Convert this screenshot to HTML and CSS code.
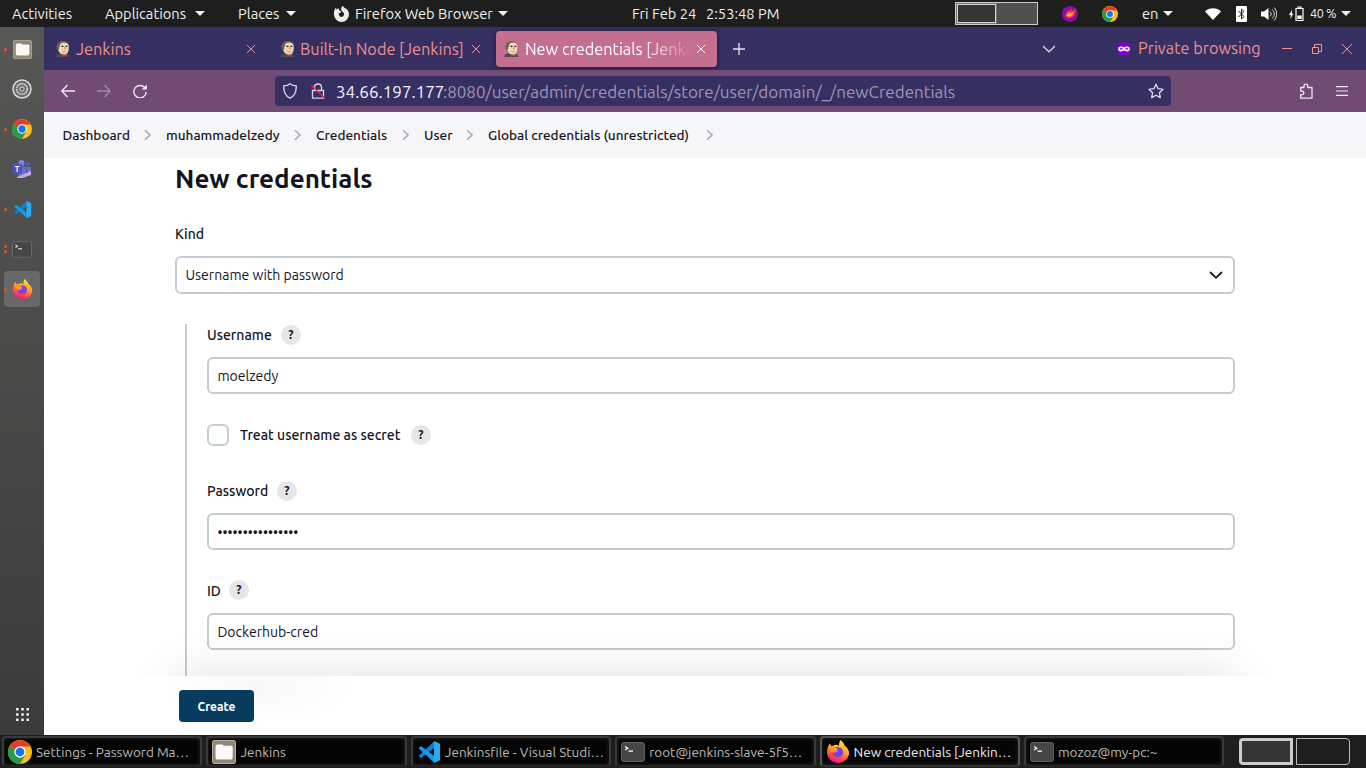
FILE: index.html
```html
<!DOCTYPE html>
<html lang="en">
<head>
<meta charset="utf-8">
<title>New credentials [Jenkins]</title>
<link rel="stylesheet" href="styles.css">
</head>
<body>
<svg class="defs" width="0" height="0">
  <defs>
    <linearGradient id="fxg" x1=".7" y1="0" x2=".3" y2="1"><stop offset="0" stop-color="#ffe83e"/><stop offset=".45" stop-color="#ff9a28"/><stop offset=".75" stop-color="#ff4250"/><stop offset="1" stop-color="#e8118c"/></linearGradient>
    <symbol id="chrome" viewBox="0 0 24 24">
      <circle cx="12" cy="12" r="12" fill="#fbc116"/>
      <path d="M12 12 1.600 6A12 12 0 0 0 12 24l5.200-9z" fill="#2a9a48"/>
      <path d="M12 12 1.600 6A12 12 0 0 1 22.400 6.600H12z" fill="#e33b2e"/>
      <circle cx="12" cy="12" r="5.700" fill="#fff"/><circle cx="12" cy="12" r="4.400" fill="#1a73e8"/>
    </symbol>
    <symbol id="firefox" viewBox="0 0 24 24">
      <path d="M14.500 0c2 1.500 3.500 3.500 4 5.500 3 2 5 5 4.600 9A11.300 11.300 0 0 1 1 13.500C.7 10 1.700 7 3.500 3.500L5.700 6 9.500 4.800C11 4.600 12.200 5 13 6c0-2.500.3-4.500 1.500-6z" fill="url(#fxg)"/>
      <path d="M8 8.500c3-2.500 7.500-1.500 8.700 1.700 1.300 3.600-.7 7-4.700 7-3.400 0-5.800-2.400-5.300-5 .9 1 2.500.8 3.400 0l2-.9c-1-.8-2.500-.8-4.100-2.800z" fill="#7542e5"/>
      <path d="M3 6.500c3-1.500 6 .3 9 2.600-.6 1.600-3 1-4.500 3C5 12 4 9 3 6.500z" fill="#ff9629"/>
    </symbol>
    <symbol id="code" viewBox="0 0 24 24">
      <path d="M17 1.500 1.500 15.800 4 18 18 7.500z" fill="#1180c4"/><path d="M17 22.500 1.500 8.200 4 6 18 16.500z" fill="#0f9be8"/><path d="M17 1 23 3.800v16.400L17 23z" fill="#29a9f2"/>
    </symbol>
    <symbol id="term" viewBox="0 0 24 20"><rect x=".6" y=".6" width="22.800" height="18.800" rx="2" fill="#464646" stroke="#777" stroke-width=".8"/><path d="m4 4.500 2.800 1.700L4 7.900M7.500 9.200H12" fill="none" stroke="#fff" stroke-width="1.200"/></symbol>
    <symbol id="files" viewBox="0 0 24 24"><rect x=".5" y=".5" width="23" height="23" rx="1.800" fill="#8f8775" stroke="#b9b3a0"/><path d="M3.500 7c0-2 .8-2.500 2-2.500h5l1.200 1.200H19c1.200 0 1.700.7 1.700 1.800v9.700c0 1.600-.7 2.300-2.300 2.300H5.800c-1.600 0-2.300-.7-2.300-2.300z" fill="#faf9f7"/></symbol>
    <symbol id="jenkins" viewBox="0 0 14 16">
      <path d="M0 16c0-2 1.200-3 3-3.400l8.500.2c1.400.5 2 1.500 2 3.200z" fill="#335061"/>
      <path d="M2 5.500C2 2.200 4.500.5 7.800.5s5.700 2 5.700 5.300c0 5-1.500 8-5 8.500C5 14 2 11 2 5.500z" fill="#f0d6b7" stroke="#4b403a" stroke-width=".5"/>
      <path d="M1.300 8C.3 3.500 3 .2 7 .2c2 0 4 .5 5.300 2C10 1.200 7 1 5.500 2.300 4.300 3.500 4.500 5 3.800 6.500L3.200 9z" fill="#6a6258"/>
      <path d="M6 5.400h2M10 5.400h1.800" stroke="#2c2522" stroke-width="1.100"/>
      <path d="M9.300 6v2h1M6.800 10.500c1.300.6 2.700.5 3.800-.2" stroke="#a0755c" stroke-width=".7" fill="none"/>
      <path d="m6 12.700 2.800 1.100 2.700-1.100V16l-2.700-1.200L6 16z" fill="#d33833"/>
    </symbol>
    <symbol id="down" viewBox="0 0 10 5"><path d="M0 0h10L5 5z" fill="#eee"/></symbol>
    <symbol id="close" viewBox="0 0 10 10"><path d="m1 1 8 8M9 1 1 9" stroke="currentColor" fill="none"/></symbol>
    <symbol id="crumb" viewBox="0 0 8 12"><path d="m1 1.200 5 4.800-5 4.800" stroke="#a5a5b3" stroke-width="1.500" fill="none"/></symbol>
  </defs>
</svg>

<header class="panel">
  <span class="activities">Activities</span>
  <span class="applications">Applications</span><svg class="down"><use href="#down"/></svg>
  <span class="places">Places</span><svg class="down"><use href="#down"/></svg>
  <svg class="fx-mono" viewBox="0 0 16 16"><path d="M2.500 2 4 3.500 5.500 2l.7 2.200L8.500 6 5.700 7.500C6 10 7 11 8.500 11a2.800 2.800 0 0 0 1-5.300L8 3.800 9 0c1.200.3 2 1 2.600 2C14.500 3.200 16 5.600 16 8.500A7.500 7.500 0 0 1 1 8.500C.8 6 1.300 4 2.500 2z" fill="#eee"/></svg>
  <span class="app-name">Firefox Web Browser</span><svg class="down"><use href="#down"/></svg>
  <span class="date">Fri Feb 24</span><span class="time">2:53:48 PM</span>
  <div class="workspaces"><i class="on"></i><i></i></div>
  <svg class="flame" viewBox="0 0 16 16"><circle cx="8" cy="8" r="8" fill="#8a0fa6"/><path d="M3 9.500 6.500 3.500l-.3 3L9.800 2.500 9.500 6 13.500 3c.3 4-1 8-5.500 9-2.500.2-3.500-1-5-2.500z" fill="#ff3f3c"/><path d="m4.500 9.700 3-4-.2 3L11 5.500c0 3-1.500 5-4 5z" fill="#ffb92e"/></svg>
  <svg class="chrome-s"><use href="#chrome"/></svg>
  <span class="lang">en</span><svg class="down lang-down"><use href="#down"/></svg>
  <svg class="wifi" viewBox="0 0 16 12"><path d="M0 3.500C4-.8 12-.8 16 3.500L8 12z" fill="#fff"/></svg>
  <svg class="bt" viewBox="0 0 11 16"><rect width="11" height="16" rx="1" fill="#fff"/><path d="M2.500 5 8 10.500l-2.500 2.300V3.200L8 5.500 2.500 11" fill="none" stroke="#1e1e1e"/></svg>
  <svg class="vol" viewBox="0 0 16 16"><path d="M0 5.500h3L7.500 2v12L3 10.500H0z" fill="#fff"/><path d="M9 5.500c1.500 1.500 1.500 3.500 0 5M11 3.300c3 2.500 3 6.800 0 9.400M13 1.500c3.500 3.500 3.500 9.500 0 13" fill="none" stroke="#ddd"/></svg>
  <svg class="bat" viewBox="0 0 15 16"><path d="M7 2.500h7v12H7zM9 1h3v1.500H9z" fill="none" stroke="#fff" stroke-width="1.200"/><path d="M8.300 9.500h4.400V13H8.300z" fill="#fff"/><path d="M3.200 3.500 0 9h1.800l-.4 4L4.300 7.500H2.600z" fill="#fff"/></svg>
  <span class="pct">40 %</span><svg class="down"><use href="#down"/></svg>
</header>

<div class="desktop">
  <aside class="dock">
    <div class="dock-item run"><svg width="19" height="19"><use href="#files"/></svg></div>
    <div class="dock-item"><svg width="20" height="20" viewBox="0 0 20 20"><circle cx="10" cy="10" r="9" fill="#666" stroke="#ddd" stroke-width="1.500"/><circle cx="10" cy="10" r="5.300" fill="none" stroke="#c4c4c4" stroke-width="2" stroke-dasharray="1.900 .5"/><circle cx="10" cy="10" r="3.200" fill="#bbb" stroke="#666" stroke-width=".8"/><circle cx="10" cy="10" r="1.300" fill="#555"/></svg></div>
    <div class="dock-item run"><svg width="20" height="20"><use href="#chrome"/></svg></div>
    <div class="dock-item"><svg width="20" height="20" viewBox="0 0 20 20"><circle cx="9.500" cy="4" r="3" fill="#7b83eb"/><circle cx="16" cy="5" r="2.200" fill="#5059c9"/><path d="M6 7.500h8V18a5 5 0 0 1-8-4zM14.500 8H19v6a3.500 3.500 0 0 1-4 3z" fill="#6570d6"/><rect x=".5" y="5" width="9.500" height="9.500" rx="1" fill="#4b53bc"/><path d="M3 7.500h4.500M5.200 7.500V13" stroke="#fff" stroke-width="1.200"/><path d="m5 18 14-6v4l-9 3H5z" fill="#c9a7ea"/></svg></div>
    <div class="dock-item run"><svg width="19" height="19"><use href="#code"/></svg></div>
    <div class="dock-item run two"><svg width="20" height="17"><use href="#term"/></svg></div>
    <div class="dock-item run active"><svg width="21" height="21"><use href="#firefox"/></svg></div>
    <svg class="grid-icon" viewBox="0 0 13 13"><path d="M1.300 0v13M6.500 0v13M11.700 0v13" stroke="#f3f3f3" stroke-width="2.500" stroke-dasharray="2.600 2.600"/></svg>
  </aside>

  <main class="window">
    <div class="tabs">
      <div class="tab t1"><svg class="fav"><use href="#jenkins"/></svg><span>Jenkins</span><svg class="x"><use href="#close"/></svg></div>
      <div class="tab t2"><svg class="fav"><use href="#jenkins"/></svg><span>Built-In Node [Jenkins]</span><svg class="x"><use href="#close"/></svg></div>
      <div class="tab t3"><svg class="fav"><use href="#jenkins"/></svg><span>New credentials [Jenkins]</span><svg class="x"><use href="#close"/></svg></div>
      <svg class="plus" viewBox="0 0 12 12"><path d="M6 0v12M0 6h12" stroke="#e8e4ee" stroke-width="1.300"/></svg>
      <svg class="list" viewBox="0 0 12 8"><path d="m0 1 6 5.800L12 1" fill="none" stroke="#d6d2e0" stroke-width="1.300"/></svg>
      <svg class="mask" viewBox="0 0 14 14"><circle cx="7" cy="7" r="7" fill="#8000d7"/><path d="M4 4.500c1.200 0 2 .6 3 .6s1.800-.6 3-.6c1.700 0 2.800 1 2.800 2.500S11.800 9.500 10.200 9.500 8 8.500 7 8.500s-1.600 1-3.200 1S1.200 8.500 1.200 7 2.300 4.500 4 4.500z" fill="#fff"/><path d="M3 7.300c.6-.8 1.800-.8 2.500 0M8.500 7.300c.7-.8 1.900-.8 2.500 0" stroke="#8000d7" stroke-width="1.200" fill="none"/></svg>
      <span class="private">Private browsing</span>
      <svg class="win" viewBox="0 0 10 10"><path d="M0 4.500h10" stroke="#f59393"/></svg>
      <svg class="win" viewBox="0 0 10 10"><path d="M.5 3.500h6v6h-6zM2.500 3.500v-3h7v7h-3" fill="none" stroke="#f59393"/></svg>
      <svg class="win" viewBox="0 0 10 10"><path d="m0 0 10 10M10 0 0 10" stroke="#f59393"/></svg>
    </div>
    <div class="toolbar">
      <svg class="nav" viewBox="0 0 14 14"><path d="M14 7H1M6.500 1 .8 7l5.700 6" fill="none" stroke="#eee6f0" stroke-width="1.400"/></svg>
      <svg class="nav" viewBox="0 0 14 14"><path d="M0 7h13M7.500 1l5.700 6-5.700 6" fill="none" stroke="#a588ab" stroke-width="1.300"/></svg>
      <svg class="nav" viewBox="0 0 14 14"><path d="M12.600 5A6.200 6.200 0 1 0 13.200 8" fill="none" stroke="#f2ebf3" stroke-width="1.400"/><path d="M13.800.4v5.200H8.600z" fill="#f2ebf3"/></svg>
      <div class="url">
        <svg class="shield" viewBox="0 0 14 16"><path d="M7 .8c1.800 1.500 3.800 2.100 6.200 2.100C13.500 9 11.500 13 7 15.200 2.500 13 .5 9 .8 2.900 3.200 2.900 5.200 2.300 7 .8z" fill="none" stroke="#d8d4e3" stroke-width="1.400"/></svg>
        <svg class="lock" viewBox="0 0 14 16"><path d="M1.500 7.500h11v7.700h-11zM3.500 7.500V4.500c0-4.700 7-4.700 7 0v3" fill="none" stroke="#d8d4e3" stroke-width="1.300"/><path d="m0 2 14 13.500" stroke="#f0225c" stroke-width="1.400"/></svg>
        <span class="host">34.66.197.177</span><span class="path">:8080/user/admin/credentials/store/user/domain/_/newCredentials</span>
        <svg class="star" viewBox="0 0 16 16"><path d="m8 1.200 2.100 4.500 4.900.6-3.600 3.400.9 4.900L8 12.200l-4.300 2.400.9-4.900L1 6.300l4.900-.6z" fill="none" stroke="#e0dce8" stroke-width="1.300" stroke-linejoin="round"/></svg>
      </div>
      <svg class="ext" viewBox="0 0 15 16"><path d="M1.700 4.500H5V3c0-2.600 3.700-2.600 3.700 0v1.500H13v10.700H1.700v-3.500H3c2.500 0 2.500-3.600 0-3.600H1.700z" fill="none" stroke="#efe7f1" stroke-width="1.300" stroke-linejoin="round"/></svg>
      <svg class="menu" viewBox="0 0 12 10"><path d="M0 .7h12M0 5h12M0 9.300h12" stroke="#efe7f1" stroke-width="1.200"/></svg>
    </div>

    <section class="page">
      <nav class="crumbs">
        <span class="c1">Dashboard</span><svg><use href="#crumb"/></svg>
        <span class="c2">muhammadelzedy</span><svg><use href="#crumb"/></svg>
        <span class="c3">Credentials</span><svg><use href="#crumb"/></svg>
        <span class="c4">User</span><svg><use href="#crumb"/></svg>
        <span class="c5">Global credentials (unrestricted)</span><svg><use href="#crumb"/></svg>
      </nav>
      <div class="form">
        <h1>New credentials</h1>
        <div class="label kind">Kind</div>
        <div class="field select"><span>Username with password</span><svg viewBox="0 0 14 9"><path d="m1.500 1.500 5.500 5.300 5.500-5.300" fill="none" stroke="#14141f" stroke-width="1.800" stroke-linecap="round"/></svg></div>
        <div class="group">
          <div class="label l-user"><span>Username</span><b class="help">?</b></div>
          <div class="field f-user"><span>moelzedy</span></div>
          <div class="label check"><i class="box"></i><span>Treat username as secret</span><b class="help">?</b></div>
          <div class="label l-pass"><span>Password</span><b class="help">?</b></div>
          <div class="field f-pass"><span>••••••••••••••••</span></div>
          <div class="label l-id"><span>ID</span><b class="help">?</b></div>
          <div class="field f-id"><span>Dockerhub-cred</span></div>
        </div>
      </div>
      <footer class="actions"><div class="actions-inner"><button class="create">Create</button></div></footer>
    </section>
  </main>
</div>

<footer class="taskbar">
  <div class="task k1"><svg class="ic"><use href="#chrome"/></svg><span>Settings - Password Ma…</span></div>
  <div class="task k2"><svg class="ic"><use href="#files"/></svg><span>Jenkins</span></div>
  <div class="task k3"><svg class="ic"><use href="#code"/></svg><span>Jenkinsfile - Visual Studi…</span></div>
  <div class="task k4"><svg class="ic"><use href="#term"/></svg><span>root@jenkins-slave-5f5…</span></div>
  <div class="task k5 current"><svg class="ic"><use href="#firefox"/></svg><span>New credentials [Jenkin…</span></div>
  <div class="task k6"><svg class="ic"><use href="#term"/></svg><span>mozoz@my-pc:~</span></div>
  <div class="pager"><i class="on"></i><i></i></div>
</footer>
</body>
</html>
```
FILE: styles.css
```css
* { box-sizing: border-box; }
body { margin: 0; width: 1366px; height: 768px; overflow: hidden; font-family: Ubuntu, "Noto Sans", sans-serif; background: #fff; display: flex; flex-direction: column; }
svg { display: block; flex: none; }
span { white-space: nowrap; flex: none; display: block; }
.defs { position: absolute; }

/* top panel */
.panel { height: 27px; flex: none; background: #1e1e1e; color: #eee; display: flex; align-items: center; font-size: 14.667px; line-height: 27px; padding-left: 12px; }
.down { width: 10px; height: 5px; }
.activities { width: 93px; }
.applications { width: 90px; }
.places { width: 48px; margin-left: 33px; }
.fx-mono { width: 16px; height: 16px; margin: 0 6px 0 37px; }
.app-name { width: 143px; }
.date { width: 74px; margin-left: 124px; }
.time { width: 249px; }
.workspaces { width: 83px; height: 23px; border: 1px solid #ccc; display: flex; background: #505050; }
.workspaces .on { width: 41px; border: 2px solid #d2d2d2; background: #353535; outline: 1px solid #777; outline-offset: -1px; }
.flame { width: 16px; height: 16px; margin-left: 24px; }
.chrome-s { width: 16px; height: 16px; margin: 0 24px; }
.lang { width: 21px; }
.lang-down { margin-right: 32px; }
.wifi { width: 16px; height: 12px; }
.bt { width: 11px; height: 16px; margin-left: 15px; }
.vol { width: 16px; height: 16px; margin: 0 12px 0 14px; }
.bat { width: 15px; height: 16px; margin-right: 6px; }
.pct { width: 31px; font-size: 12.5px; letter-spacing: -.3px; }

.desktop { height: 708px; flex: none; display: flex; }

/* dock */
.dock { width: 44px; background: linear-gradient(#575755, #3b3b3b); display: flex; flex-direction: column; align-items: center; padding-top: 4px; }
.dock-item { width: 36px; height: 36px; margin-bottom: 4px; display: flex; align-items: center; justify-content: center; position: relative; border-radius: 4px; flex: none; }
.dock-item.active { background: #686868; }
.run::before { content: ""; position: absolute; left: 0; top: 17px; width: 3px; height: 3px; border-radius: 50%; background: #e95420; }
.two::before { top: 14px; box-shadow: 0 5px #e95420; }
.grid-icon { width: 13px; height: 13px; margin-top: auto; margin-bottom: 14px; }

/* browser chrome */
.window { width: 1322px; }
.tabs { height: 43px; background: #363062; display: flex; align-items: center; color: #ee8e8e; font-size: 16.3px; overflow: hidden; }
.tab { display: flex; flex: none; align-items: center; height: 36px; border-radius: 4px; padding-left: 11px; margin-right: 4px; }
.tab span { overflow: hidden; margin-left: 6px; }
.fav { width: 15px; height: 16px; }
.x { width: 10px; height: 10px; }
.t1 { width: 221px; }
.t1 span { width: 170px; }
.t2 { width: 223px; }
.t2 span { width: 171px; margin-left: 5px; }
.t3 { width: 221px; background: #c46f90; color: #fff; padding-left: 8px; box-shadow: 0 0 4px rgba(0,0,0,.5); }
.t3 span { width: 166px; margin-right: 5px; mask-image: linear-gradient(90deg, #000 120px, transparent 168px); }
.plus { width: 12px; height: 12px; margin-left: 12px; }
.list { width: 12px; height: 8px; margin-left: 298px; }
.mask { width: 14px; height: 14px; margin: 0 7px 0 62px; }
.private { width: 144px; padding-bottom: 1px; }
.win { width: 10px; height: 10px; margin-right: 20px; }
.toolbar { height: 42px; background: #704c74; display: flex; align-items: center; padding-left: 17px; }
.nav { width: 14px; height: 14px; margin-right: 22px; }
.url { width: 896px; height: 30px; background: #363062; border-radius: 4px; margin-left: 106px; display: flex; align-items: center; padding-left: 8px; font-size: 17px; }
.shield { width: 14px; height: 16px; }
.lock { width: 14px; height: 16px; margin: 0 11px 0 14px; }
.host { color: #f5f0fa; width: 107px; }
.path { color: #a193b2; width: 705px; }
.star { width: 16px; height: 16px; }
.ext { width: 15px; height: 16px; margin: 0 22px 0 128px; }
.menu { width: 12px; height: 10px; }

/* page */
.page { height: 623px; background: #fff; position: relative; color: #14141f; display: flex; flex-direction: column; overflow: hidden; z-index: 0; }
.crumbs { height: 46px; flex: none; background: #f6f6f8; display: flex; align-items: center; padding-left: 18.5px; font-size: 13.6px; font-weight: 500; }
.crumbs svg { width: 8px; height: 12px; margin-right: 14px; }
.c1 { width: 81.5px; }
.c2 { width: 128px; }
.c3 { width: 86px; }
.c4 { width: 42px; }
.c5 { width: 218px; }
.form { padding: 0 131px; flex: 1; min-height: 0; overflow: hidden; }
h1 { margin: 0; height: 42px; line-height: 42px; font-size: 26px; font-weight: 700; }
.label { display: flex; align-items: center; height: 20px; font-size: 14px; font-weight: 500; }
.kind { margin: 24px 0 12px; }
.field { height: 37px; border: 2px solid #c3ccd1; border-radius: 6px; padding: 0 8.4px; display: flex; align-items: center; font-size: 14.05px; background: #fff; }
.select { height: 38px; justify-content: space-between; padding-right: 10px; }
.select svg { width: 14px; height: 9px; }
.group { margin: 30px 0 0 10px; border-left: 2px solid #c3ccd1; padding: 1px 0 0 20px; height: 400px; }
.help { width: 20px; height: 20px; border-radius: 50%; background: #e6e6e7; font-size: 12px; line-height: 20px; text-align: center; margin-left: 8px; }
.f-user { margin: 12px 0 30px; }
.check { height: 22px; }
.box { width: 22px; height: 22px; border: 2px solid #c3ccd1; border-radius: 6px; margin-right: 11px; }
.l-pass { margin-top: 35px; }
.f-pass { margin: 12px 0 30px; }
.f-id { margin-top: 13px; }
.l-user span { width: 66px; }
.check > span { width: 163px; }
.l-pass span { width: 62px; }
.l-id span { width: 14px; padding-top: 1px; }
.actions { position: relative; height: 59px; flex: none; }
.actions::before { content: ""; position: absolute; left: 131px; right: 131px; top: 0; height: 100px; box-shadow: 0 0 52px rgba(0,0,0,.12); }
.actions-inner { position: relative; height: 59px; padding: 14px 135px; background: radial-gradient(ellipse 100px 38px at 215px 12px, #f8f8f8, #fff); }
.create { display: block; width: 75px; height: 32px; border: 0; border-radius: 4px; background: #073c5f; color: #fff; font: 700 12px Ubuntu, "Noto Sans", sans-serif; padding: 0; }

/* bottom taskbar */
.taskbar { height: 33px; flex: none; background: #1e1e1e; display: flex; align-items: center; padding-left: 2px; gap: 4px; }
.task { width: 200.4px; flex: none; height: 31px; border: 2px solid #393939; border-radius: 4px; border-bottom-color: #252525; background: #050505; color: #b9b9b9; display: flex; align-items: center; padding-left: 4px; font-size: 13.500px; box-shadow: inset 0 0 4px #292929; }
.current { color: #eee; border-color: #555; border-bottom-color: #333; }
.ic { width: 24px; height: 24px; margin-right: 4px; }
.pager { display: flex; gap: 3px; margin-left: 11px; }
.pager i { width: 54px; height: 27px; border: 1px solid #bbb; border-radius: 0 4px 4px 0; }
.pager .on { border: 3px solid #ccc; background: #353535; border-radius: 4px 0 0 4px; }
```
